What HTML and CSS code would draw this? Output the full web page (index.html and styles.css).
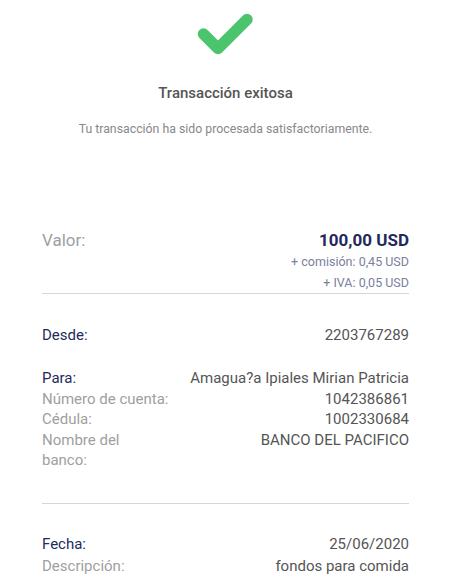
FILE: index.html
```html
<!DOCTYPE html>
<html lang="es">
<head>
<meta charset="utf-8">
<link rel="stylesheet" href="styles.css">
</head>
<body>
<main class="receipt">
  <header class="status">
    <svg class="check" width="60" height="48" viewBox="0 0 60 48">
      <polyline points="7.5,23 22,37.5 51,8.5" fill="none" stroke="#4bc46d" stroke-width="11.5" stroke-linecap="round" stroke-linejoin="round"/>
    </svg>
    <h1 class="title">Transacción exitosa</h1>
    <p class="subtitle">Tu transacción ha sido procesada satisfactoriamente.</p>
  </header>

  <section class="amount">
    <div class="row amount-row">
      <span class="label-muted">Valor:</span>
      <span class="amount-value">100,00 USD</span>
    </div>
    <div class="fee">+ comisión: 0,45 USD</div>
    <div class="fee">+ IVA: 0,05 USD</div>
  </section>

  <section class="block from">
    <div class="row">
      <span class="label-strong">Desde:</span>
      <span class="value">2203767289</span>
    </div>
  </section>

  <section class="block to">
    <div class="row">
      <span class="label-strong">Para:</span>
      <span class="value">Amagua?a Ipiales Mirian Patricia</span>
    </div>
    <div class="row">
      <span class="label-muted">Número de cuenta:</span>
      <span class="value">1042386861</span>
    </div>
    <div class="row">
      <span class="label-muted">Cédula:</span>
      <span class="value">1002330684</span>
    </div>
    <div class="row">
      <span class="label-muted narrow">Nombre del banco:</span>
      <span class="value">BANCO DEL PACIFICO</span>
    </div>
  </section>

  <section class="block date">
    <div class="row">
      <span class="label-strong">Fecha:</span>
      <span class="value">25/06/2020</span>
    </div>
    <div class="row">
      <span class="label-muted">Descripción:</span>
      <span class="value">fondos para comida</span>
    </div>
  </section>
</main>
</body>
</html>
```

FILE: styles.css
```css
* { box-sizing: border-box; }
html, body { margin: 0; padding: 0; background: #fff; }
body {
  font-family: Roboto, "Liberation Sans", sans-serif;
  color: #555;
}
.receipt {
  padding: 0 56px 0 42px;
}
.status {
  display: flex;
  flex-direction: column;
  align-items: center;
  padding-top: 11px;
}
.check { display: block; }
.title {
  margin: 25px 0 0;
  font-size: 15px;
  font-weight: 500;
  color: #555;
  line-height: 18px;
}
.subtitle {
  margin: 20px 0 0;
  font-size: 12.3px;
  color: #888;
  line-height: 14px;
}
.amount {
  margin-top: 93px;
  border-bottom: 1px solid #d6d6d6;
}
.row {
  display: flex;
  justify-content: space-between;
  align-items: flex-start;
  font-size: 15px;
  line-height: 20.5px;
}
.amount-row {
  font-size: 17px;
  line-height: 22px;
}
.label-muted { color: #a0a0a0; }
.label-muted.narrow { width: 90px; }
.label-strong { color: #1f2a5c; }
.value { color: #555; text-align: right; }
.amount-value {
  color: #1f2a5c;
  font-weight: 700;
  font-size: 17px;
}
.fee {
  text-align: right;
  font-size: 12.5px;
  color: #7b809e;
  line-height: 21px;
}
.block { padding-top: 31px; }
.to { padding-top: 22.5px; padding-bottom: 32px; border-bottom: 1px solid #d6d6d6; }
.date { padding-top: 29px; }
.date .row { line-height: 22px; }
```
